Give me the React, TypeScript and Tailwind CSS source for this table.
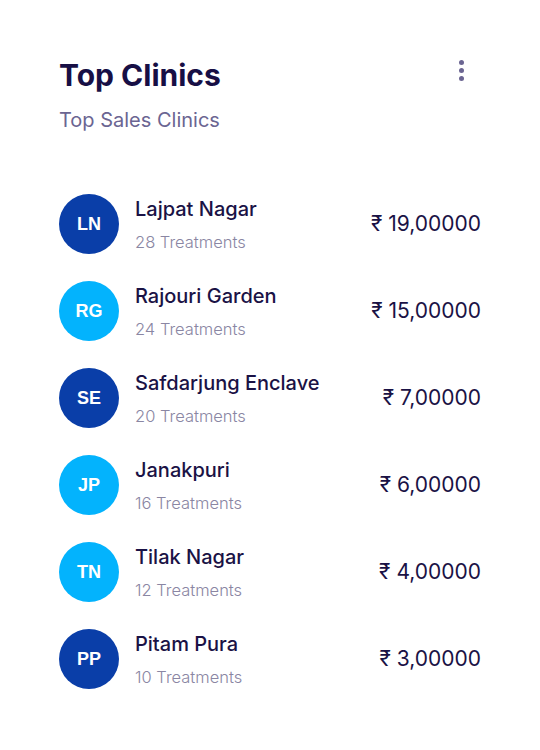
const clinics = [
  { initials: 'LN', name: 'Lajpat Nagar', treatments: 28, amount: '19,00000', dark: true },
  { initials: 'RG', name: 'Rajouri Garden', treatments: 24, amount: '15,00000', dark: false },
  { initials: 'SE', name: 'Safdarjung Enclave', treatments: 20, amount: '7,00000', dark: true },
  { initials: 'JP', name: 'Janakpuri', treatments: 16, amount: '6,00000', dark: false },
  { initials: 'TN', name: 'Tilak Nagar', treatments: 12, amount: '4,00000', dark: false },
  { initials: 'PP', name: 'Pitam Pura', treatments: 10, amount: '3,00000', dark: true },
];

export default function App() {
  return (
    <div className="w-[540px] h-[750px] bg-white font-['Inter',sans-serif] px-[59px] pt-[57px]">
      <div className="flex items-start justify-between">
        <div>
          <h2 className="text-[30px] leading-[36px] font-bold text-[#170f45]">Top Clinics</h2>
          <p className="mt-[13px] text-[20px] leading-[28px] text-[#6b6592]">Top Sales Clinics</p>
        </div>
        <div className="flex flex-col gap-[3px] mt-[3px] mr-[17px]">
          <span className="w-[5px] h-[5px] rounded-full bg-[#6b6592]" />
          <span className="w-[5px] h-[5px] rounded-full bg-[#6b6592]" />
          <span className="w-[5px] h-[5px] rounded-full bg-[#6b6592]" />
        </div>
      </div>

      <ul className="mt-[60px] flex flex-col gap-[27px]">
        {clinics.map((c) => (
          <li key={c.initials} className="flex items-center">
            <div
              className={`w-[60px] h-[60px] rounded-full flex items-center justify-center shrink-0 text-white text-[18px] font-bold font-['Liberation_Sans',sans-serif] ${
                c.dark ? 'bg-[#0a3ea8]' : 'bg-[#03b3fd]'
              }`}
            >
              {c.initials}
            </div>
            <div className="ml-[16px] flex-1">
              <div className="text-[20px] leading-[28px] font-medium text-[#1a1245]">{c.name}</div>
              <div className="mt-[8px] text-[16.5px] leading-[22px] font-light text-[#8a86a3]">
                {c.treatments} Treatments
              </div>
            </div>
            <div className="text-[21px] leading-[28px] text-[#1a1245]">
              ₹ {c.amount}
            </div>
          </li>
        ))}
      </ul>
    </div>
  );
}
